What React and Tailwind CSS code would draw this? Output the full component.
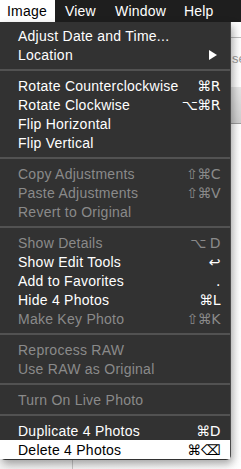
import React from "react";

const SEP = "sep";

const items = [
  { label: "Adjust Date and Time..." },
  { label: "Location", submenu: true },
  SEP,
  { label: "Rotate Counterclockwise", key: "⌘R" },
  { label: "Rotate Clockwise", key: "⌥⌘R" },
  { label: "Flip Horizontal" },
  { label: "Flip Vertical" },
  SEP,
  { label: "Copy Adjustments", key: "⇧⌘C", disabled: true },
  { label: "Paste Adjustments", key: "⇧⌘V", disabled: true },
  { label: "Revert to Original", disabled: true },
  SEP,
  { label: "Show Details", key: "⌥ D", disabled: true },
  { label: "Show Edit Tools", key: "↩" },
  { label: "Add to Favorites", key: "." },
  { label: "Hide 4 Photos", key: "⌘L" },
  { label: "Make Key Photo", key: "⇧⌘K", disabled: true },
  SEP,
  { label: "Reprocess RAW", disabled: true },
  { label: "Use RAW as Original", disabled: true },
  SEP,
  { label: "Turn On Live Photo", disabled: true },
  SEP,
  { label: "Duplicate 4 Photos", key: "⌘D" },
  { label: "Delete 4 Photos", key: "⌘⌫", active: true },
];

function MenuRow({ item }) {
  const color = item.active
    ? "bg-white text-black"
    : item.disabled
    ? "text-[#8a8a8a]"
    : "text-white";
  return (
    <div className={`flex h-[19px] items-center justify-between pl-[18px] pr-[10px] ${color}`}>
      <span className="leading-none tracking-[0.25px]">{item.label}</span>
      {item.submenu && (
        <svg width="8" height="10" viewBox="0 0 8 10" className="mr-[3px]">
          <path d="M0 0 L8 5 L0 10 Z" fill="#ffffff" />
        </svg>
      )}
      {item.key && (
        <span className="font-['DejaVu_Sans',sans-serif] text-[14px] leading-none tracking-[-0.5px]">
          {item.key}
        </span>
      )}
    </div>
  );
}

export default function App() {
  return (
    <div className="relative h-[469px] w-[241px] overflow-hidden bg-white font-['Liberation_Sans',Arial,sans-serif] text-[14px]">
      <div className="flex h-[22px] items-center bg-[#1e1e1e] text-white tracking-[0.2px]">
        <div className="flex h-full w-[55px] items-center bg-white pl-[7px] text-black">Image</div>
        <div className="w-[50px] pl-[10px]">View</div>
        <div className="w-[69px] pl-[10px]">Window</div>
        <div className="pl-[10px]">Help</div>
      </div>

      {/* window content behind the menu */}
      <div className="h-[447px] bg-gradient-to-r from-[#f2f2f2] to-white">
        <div className="h-[15px]" />
        <div className="h-px bg-[#bdbdbd]" />
        <div className="pl-[232px] pt-[14px] text-[13px] leading-none text-[#9a9a9a]">se</div>
        <div className="mt-[22px] h-[37px] border-b border-[#9e9e9e] bg-gradient-to-b from-[#e6e6e6] to-[#cfcfcf]" />
      </div>
      <div className="absolute bottom-0 left-[72px] h-[9px] w-px bg-[#c8c8c8]" />

      <div className="absolute left-0 top-[22px] w-[231px] rounded-b-[5px] border-r border-[#4a4a4a] bg-[#323232] pb-px pt-[4px] shadow-[2px_4px_8px_rgba(0,0,0,0.35)]">
        {items.map((item, i) =>
          item === SEP ? (
            <div key={i} className="flex h-[12px] items-center">
              <div className="h-[2px] w-full bg-[#525252]" />
            </div>
          ) : (
            <MenuRow key={i} item={item} />
          )
        )}
      </div>
    </div>
  );
}
